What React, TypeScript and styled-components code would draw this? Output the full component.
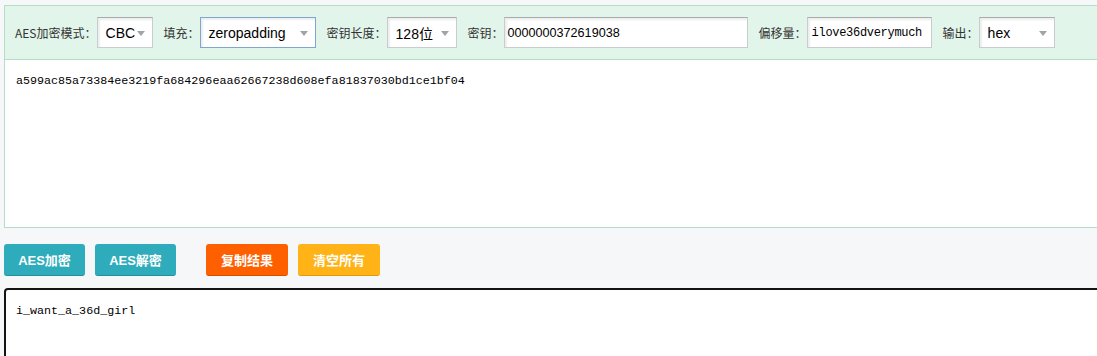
import styled, { createGlobalStyle } from 'styled-components';

const GlobalStyle = createGlobalStyle`
  body {
    margin: 0;
    background: #f5f7f9;
    overflow: hidden;
    font-family: "Liberation Sans", "Noto Sans CJK SC", sans-serif;
  }
`;

const Page = styled.main`
  padding: 5px 0 0 4px;
  width: 1130px;
`;

const Panel = styled.section`
  border: 1px solid #b4dfc5;
  background: #fff;
`;

const Toolbar = styled.div`
  display: flex;
  align-items: center;
  gap: 11px;
  height: 53px;
  padding: 0 10px;
  background: #e1f5ea;
  border-bottom: 1px solid #b4dfc5;
`;

const Field = styled.div`
  display: flex;
  align-items: center;
`;

const Label = styled.span`
  font-family: "Noto Sans CJK SC", sans-serif;
  font-size: 12px;
  color: #333;
`;

interface BoxProps {
  $w: number;
  $focus?: boolean;
}

const Box = styled.div<BoxProps>`
  position: relative;
  display: flex;
  align-items: center;
  box-sizing: border-box;
  width: ${({ $w }) => $w}px;
  height: 31px;
  padding-left: 8px;
  background: #fff;
  border: 1px solid ${({ $focus }) => ($focus ? '#7fa6cf' : '#c9cccf')};
  border-top-color: ${({ $focus }) => ($focus ? '#7fa6cf' : '#a9abad')};
  box-shadow: inset 2px 2px 2px rgba(0, 0, 0, 0.07);
  font-size: 14px;
  color: #000;
`;

const Arrow = styled.i`
  position: absolute;
  right: 7px;
  top: 13px;
  width: 0;
  height: 0;
  border-left: 4.5px solid transparent;
  border-right: 4.5px solid transparent;
  border-top: 5px solid #a3a3a3;
`;

const Mono = styled.span<{ $sans?: boolean }>`
  font-family: ${({ $sans }) => ($sans ? '"Liberation Sans"' : '"Liberation Mono"')}, monospace;
  font-size: ${({ $sans }) => ($sans ? '12.6px' : '12px')};
  letter-spacing: ${({ $sans }) => ($sans ? '0' : '-0.3px')};
  margin-left: ${({ $sans }) => ($sans ? '-5px' : '-4px')};
`;

const Output = styled.div`
  height: 143px;
  padding: 14px 11px 10px;
  font-family: "Liberation Mono", monospace;
  font-size: 11.7px;
  color: #000;
`;

const Actions = styled.div`
  display: flex;
  align-items: center;
  gap: 10px;
  margin: 16px 0 12px;
`;

const tones = {
  teal: ['#2eacbb', '#23909d'],
  orange: ['#fe6000', '#d64f00'],
  yellow: ['#ffb317', '#e09a0c'],
};

const Button = styled.button<{ $tone: keyof typeof tones; $gapBefore?: boolean }>`
  width: ${({ $tone }) => ($tone === 'teal' ? '81px' : '82px')};
  height: 32px;
  margin-left: ${({ $gapBefore }) => ($gapBefore ? '20px' : '0')};
  border: none;
  border-bottom: 1px solid ${({ $tone }) => tones[$tone][1]};
  border-radius: 3px;
  background: ${({ $tone }) => tones[$tone][0]};
  color: #fff;
  font-family: "Liberation Sans", "Noto Sans CJK SC", sans-serif;
  font-weight: bold;
  font-size: 13px;
  padding: 0;
`;

const InputArea = styled.div`
  height: 120px;
  border: 2px solid #141414;
  border-radius: 4px;
  background: #fff;
  padding: 14px 10px;
  font-family: "Liberation Mono", monospace;
  font-size: 11.7px;
  color: #000;
`;

const App = () => {
  return (
    <Page>
      <GlobalStyle />
      <Panel>
        <Toolbar>
          <Field>
            <Label>AES加密模式：</Label>
            <Box $w={56}>
              CBC
              <Arrow />
            </Box>
          </Field>
          <Field>
            <Label>填充：</Label>
            <Box $w={116} $focus>
              zeropadding
              <Arrow />
            </Box>
          </Field>
          <Field>
            <Label>密钥长度：</Label>
            <Box $w={70}>
              128位
              <Arrow />
            </Box>
          </Field>
          <Field>
            <Label>密钥：</Label>
            <Box $w={244}>
              <Mono $sans>0000000372619038</Mono>
            </Box>
          </Field>
          <Field>
            <Label>偏移量：</Label>
            <Box $w={125}>
              <Mono>ilove36dverymuch</Mono>
            </Box>
          </Field>
          <Field>
            <Label>输出：</Label>
            <Box $w={76}>
              hex
              <Arrow />
            </Box>
          </Field>
        </Toolbar>
        <Output>a599ac85a73384ee3219fa684296eaa62667238d608efa81837030bd1ce1bf04</Output>
      </Panel>
      <Actions>
        <Button $tone="teal">AES加密</Button>
        <Button $tone="teal">AES解密</Button>
        <Button $tone="orange" $gapBefore>
          复制结果
        </Button>
        <Button $tone="yellow">清空所有</Button>
      </Actions>
      <InputArea>i_want_a_36d_girl</InputArea>
    </Page>
  );
};

export default App;
